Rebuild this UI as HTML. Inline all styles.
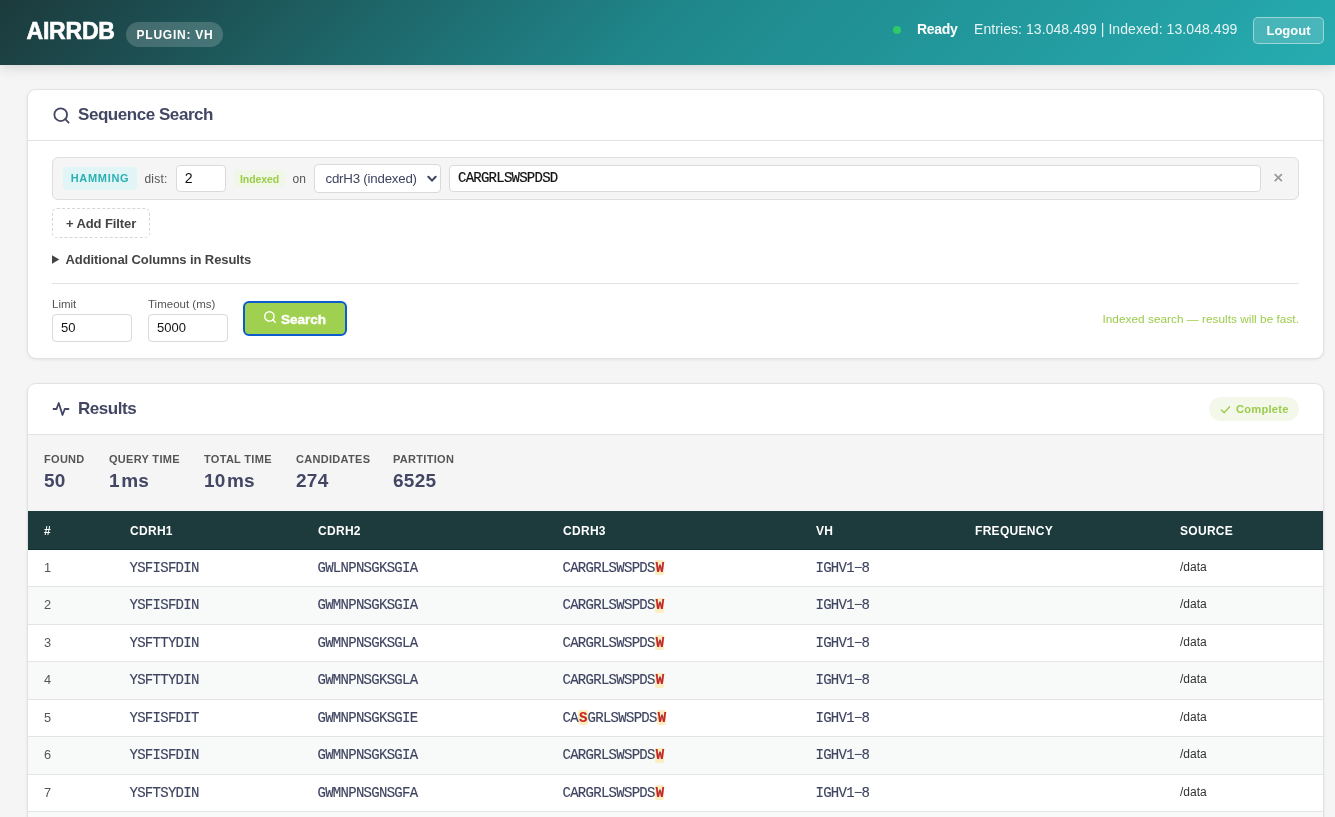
<!DOCTYPE html>
<html lang="en">
<head>
<meta charset="utf-8">
<title>AIRRDB</title>
<style>
*{box-sizing:border-box;margin:0;padding:0}
html,body{width:1335px;height:817px;overflow:hidden;background:#f5f5f5;font-family:"Liberation Sans",sans-serif;color:#3f4460}
.abs{position:absolute;white-space:nowrap}
#hdr{position:absolute;left:0;top:0;width:1335px;height:65px;background:linear-gradient(135deg,#1c3a3c 0%,#1f888c 50%,#26acb0 100%);box-shadow:0 2px 12px rgba(0,0,0,.15)}
#logo{left:26.5px;top:16px;font-size:23px;font-weight:700;color:#fff;letter-spacing:-.2px;line-height:30px;-webkit-text-stroke:.6px #fff}
#plugin{left:126px;top:22px;width:97px;height:25px;border-radius:13px;background:rgba(255,255,255,.18);color:#fff;font-size:12px;font-weight:700;letter-spacing:.75px;line-height:27px;text-align:center;padding-left:1px}
#dot{left:893px;top:26px;width:8px;height:8px;border-radius:50%;background:#2ec866}
#ready{left:917px;top:19px;font-size:14px;font-weight:700;color:#fff;line-height:20px;letter-spacing:-.3px}
#entries{left:974px;top:19px;font-size:14px;color:rgba(255,255,255,.88);line-height:20px;letter-spacing:.07px}
#logout{left:1253px;top:17px;width:71px;height:27px;border:1px solid rgba(255,255,255,.45);border-radius:5px;background:rgba(255,255,255,.16);color:#fff;font-size:13px;font-weight:700;line-height:25px;text-align:center}
.card{position:absolute;left:27px;width:1297px;background:#fff;border:1px solid #e2e2e2;border-radius:9px;box-shadow:0 1px 3px rgba(0,0,0,.08)}
.chead{position:absolute;left:0;top:0;width:100%;height:51px;border-bottom:1px solid #e2e2e2}
.ctitle{font-size:17px;font-weight:700;color:#434764;line-height:22px;letter-spacing:-.45px}
input,select{font-family:inherit}
.inp{position:absolute;background:#fff;border:1px solid #dadada;border-radius:4px;height:27px;font-size:13px;line-height:25px;color:#111;padding-left:8px;white-space:nowrap}
.mono{font-family:"Liberation Mono",monospace}

.sl{font-size:11px;font-weight:700;letter-spacing:.3px;color:#555;line-height:14px}
.sv{font-size:19px;font-weight:700;color:#434764;line-height:24px;letter-spacing:.25px;word-spacing:-4.2px}
.th{font-size:12px;font-weight:700;letter-spacing:.3px;color:#fff;line-height:16px}
.tr{z-index:0;left:0;width:1295px;height:37.5px;border-bottom:1px solid #e4e4e4}
.td{top:0;line-height:36.5px;font-size:13px;color:#3f4460}
.n{color:#555;font-size:12.8px}
.m{margin-left:-.5px;font-size:14px;letter-spacing:-.72px;-webkit-text-stroke:.15px #3f4460}
.m b{position:relative;color:#d9201f;padding:0 1px;font-weight:700}
.m b::before{content:"";position:absolute;left:0;right:0;top:.5px;height:15px;background:#fdeec0;border-radius:2px;z-index:-1}
.src{font-size:12px;color:#333;line-height:34.5px}
.card,#hdr{will-change:transform}
</style>
</head>
<body>
<div id="hdr">
  <div class="abs" id="logo">AIRRDB</div>
  <div class="abs" id="plugin">PLUGIN: VH</div>
  <div class="abs" id="dot"></div>
  <div class="abs" id="ready">Ready</div>
  <div class="abs" id="entries">Entries: 13.048.499 | Indexed: 13.048.499</div>
  <div class="abs" id="logout">Logout</div>
</div>

<!-- Sequence search card -->
<div class="card" id="c1" style="top:89px;height:270px">
  <div class="chead">
    <svg class="abs" style="left:24px;top:16px" width="19" height="19" viewBox="0 0 24 24" fill="none" stroke="#434764" stroke-width="2.3" stroke-linecap="round"><circle cx="11" cy="11" r="8"/><path d="M21 21l-4.3-4.3"/></svg>
    <div class="abs ctitle" style="left:50px;top:14px">Sequence Search</div>
  </div>

  <!-- filter row (card-relative coords: page x-28, y-90) -->
  <div class="abs" id="frow" style="left:24px;top:67px;width:1247px;height:43px;background:#f5f5f5;border:1px solid #dedede;border-radius:6px"></div>
  <div class="abs" id="ham" style="left:35px;top:77px;width:74px;height:23px;border-radius:4px;background:#e2f5f6;color:#2bb0b3;font-size:11px;font-weight:700;letter-spacing:.68px;line-height:23px;text-align:center">HAMMING</div>
  <div class="abs" style="left:116.5px;top:80px;font-size:12px;letter-spacing:.2px;color:#555;line-height:18px">dist:</div>
  <div class="inp mono" style="left:148px;top:75px;width:50px;height:27px;font-size:14px;line-height:27px;padding-left:7.5px">2</div>
  <div class="abs" id="idx" style="left:206px;top:80px;width:51px;height:17px;border-radius:3px;background:#f1f7e6;color:#9ccc4c;font-size:10.5px;font-weight:700;line-height:18px;text-align:center;letter-spacing:-.1px">Indexed</div>
  <div class="abs" style="left:264.5px;top:80px;font-size:12px;letter-spacing:.2px;color:#555;line-height:18px">on</div>
  <div class="inp" id="sel" style="left:286px;top:74px;width:127px;height:29px;line-height:27px;color:#3f4460;font-size:13.3px;letter-spacing:-.22px;padding-left:10.5px">cdrH3 (indexed)
    <svg class="abs" style="left:112px;top:9.5px" width="10" height="8.2" viewBox="0 0 11 9" fill="none" stroke="#3f4460" stroke-width="2.3" stroke-linecap="round" stroke-linejoin="round"><path d="M1.5 2l4 4.2 4-4.2"/></svg>
  </div>
  <div class="inp mono" style="left:421px;top:75px;width:812px;height:27px;line-height:25px;font-size:14px;letter-spacing:-.75px;-webkit-text-stroke:.2px #111">CARGRLSWSPDSD</div>
  <svg class="abs" style="left:1244px;top:82px" width="12" height="12" viewBox="0 0 12 12" fill="none" stroke="#999" stroke-width="1.7"><path d="M2.7 2.2l7.2 6.9M9.9 2.2l-7.2 6.9"/></svg>

  <div class="abs" id="addf" style="left:24px;top:118px;width:98px;height:30px;border:1px dashed #d6d6d6;border-radius:5px;font-size:13px;font-weight:700;color:#444;line-height:30px;text-align:center;letter-spacing:-.1px">+ Add Filter</div>

  <svg class="abs" style="left:24px;top:165px" width="8" height="9" viewBox="0 0 8 9"><path d="M0 0.3L7.3 4.5L0 8.7z" fill="#444"/></svg>
  <div class="abs" style="left:37.5px;top:161px;font-size:13px;font-weight:700;color:#444;line-height:18px;letter-spacing:-.1px">Additional Columns in Results</div>

  <div class="abs" style="left:24px;top:193px;width:1247px;height:1px;background:#e2e2e2"></div>

  <div class="abs" style="left:24px;top:207px;font-size:11.5px;color:#555;line-height:14px">Limit</div>
  <div class="inp" style="left:24px;top:224px;width:80px;height:28px;line-height:26px;font-size:13px">50</div>
  <div class="abs" style="left:120px;top:207px;font-size:11.5px;color:#555;line-height:14px">Timeout (ms)</div>
  <div class="inp" style="left:120px;top:224px;width:80px;height:28px;line-height:26px;font-size:13px">5000</div>

  <div class="abs" id="sbtn" style="left:215px;top:211px;width:104px;height:35px;border:2px solid #0c5ccf;border-radius:6px;background:#a0d04f;-webkit-text-stroke:.4px #fff;color:#fff;font-size:13.5px;font-weight:700;line-height:31px">
    <svg class="abs" style="left:18px;top:7px" width="14" height="14" viewBox="0 0 24 24" fill="none" stroke="#fff" stroke-width="2.4" stroke-linecap="round"><circle cx="11" cy="11" r="8"/><path d="M21 21l-4.3-4.3"/></svg>
    <span class="abs" style="left:36px;top:1px">Search</span>
  </div>
  <div class="abs" style="right:24px;top:221px;font-size:11.8px;letter-spacing:.03px;color:#9ccc4c;line-height:16px">Indexed search &mdash; results will be fast.</div>
</div>

<!-- Results card -->
<div class="card" id="c2" style="top:383px;height:460px;border-bottom-left-radius:0;border-bottom-right-radius:0">
  <div class="chead">
    <div class="abs ctitle" style="left:50px;top:14px">Results</div>
  </div>

  <svg class="abs" style="left:24px;top:16px" width="18" height="18" viewBox="0 0 24 24" fill="none" stroke="#434764" stroke-width="2.4" stroke-linecap="round" stroke-linejoin="round"><path d="M2 12h4l3-8 5 16 3-8h5"/></svg>
  <div class="abs" id="cmpl" style="left:1181px;top:13px;width:90px;height:24px;border-radius:12px;background:#f3f8ea;color:#9ccc4c;font-size:11.2px;letter-spacing:.2px;font-weight:700;line-height:25px">
    <svg class="abs" style="left:10.5px;top:6.5px" width="11" height="11" viewBox="0 0 24 24" fill="none" stroke="#9ccc4c" stroke-width="3" stroke-linecap="round" stroke-linejoin="round"><path d="M3 13l6 6L21 6"/></svg>
    <span class="abs" style="left:27px;top:0">Complete</span>
  </div>
  <div class="abs" id="stats" style="left:0;top:51px;width:1295px;height:76px;background:#f5f5f5"></div>
  <div class="abs sl" style="left:16px;top:68px">FOUND</div><div class="abs sv" style="left:16px;top:85px">50</div>
  <div class="abs sl" style="left:81px;top:68px">QUERY TIME</div><div class="abs sv" style="left:81px;top:85px">1 ms</div>
  <div class="abs sl" style="left:176px;top:68px">TOTAL TIME</div><div class="abs sv" style="left:176px;top:85px">10 ms</div>
  <div class="abs sl" style="left:268px;top:68px">CANDIDATES</div><div class="abs sv" style="left:268px;top:85px">274</div>
  <div class="abs sl" style="left:365px;top:68px">PARTITION</div><div class="abs sv" style="left:365px;top:85px">6525</div>
  <div class="abs" id="thead" style="left:0;top:127px;width:1295px;height:39px;background:#1d3a3c;border-bottom:1px solid #0f2f31"></div>
  <div class="abs th" style="left:16px;top:139px">#</div>
  <div class="abs th" style="left:102px;top:139px">CDRH1</div>
  <div class="abs th" style="left:290px;top:139px">CDRH2</div>
  <div class="abs th" style="left:535px;top:139px">CDRH3</div>
  <div class="abs th" style="left:788px;top:139px">VH</div>
  <div class="abs th" style="left:947px;top:139px">FREQUENCY</div>
  <div class="abs th" style="left:1152px;top:139px">SOURCE</div>
  <div class="abs tr" style="top:165.5px;background:#fff"><span class="abs td n" style="left:16px">1</span><span class="abs td mono m" style="left:102px">YSFISFDIN</span><span class="abs td mono m" style="left:290px">GWLNPNSGKSGIA</span><span class="abs td mono m" style="left:535px">CARGRLSWSPDS<b>W</b></span><span class="abs td mono m" style="left:788px">IGHV1&minus;8</span><span class="abs td src" style="left:1152px">/data</span></div>
  <div class="abs tr" style="top:203.0px;background:#f8f9f9"><span class="abs td n" style="left:16px">2</span><span class="abs td mono m" style="left:102px">YSFISFDIN</span><span class="abs td mono m" style="left:290px">GWMNPNSGKSGIA</span><span class="abs td mono m" style="left:535px">CARGRLSWSPDS<b>W</b></span><span class="abs td mono m" style="left:788px">IGHV1&minus;8</span><span class="abs td src" style="left:1152px">/data</span></div>
  <div class="abs tr" style="top:240.5px;background:#fff"><span class="abs td n" style="left:16px">3</span><span class="abs td mono m" style="left:102px">YSFTTYDIN</span><span class="abs td mono m" style="left:290px">GWMNPNSGKSGLA</span><span class="abs td mono m" style="left:535px">CARGRLSWSPDS<b>W</b></span><span class="abs td mono m" style="left:788px">IGHV1&minus;8</span><span class="abs td src" style="left:1152px">/data</span></div>
  <div class="abs tr" style="top:278.0px;background:#f8f9f9"><span class="abs td n" style="left:16px">4</span><span class="abs td mono m" style="left:102px">YSFTTYDIN</span><span class="abs td mono m" style="left:290px">GWMNPNSGKSGLA</span><span class="abs td mono m" style="left:535px">CARGRLSWSPDS<b>W</b></span><span class="abs td mono m" style="left:788px">IGHV1&minus;8</span><span class="abs td src" style="left:1152px">/data</span></div>
  <div class="abs tr" style="top:315.5px;background:#fff"><span class="abs td n" style="left:16px">5</span><span class="abs td mono m" style="left:102px">YSFISFDIT</span><span class="abs td mono m" style="left:290px">GWMNPNSGKSGIE</span><span class="abs td mono m" style="left:535px">CA<b>S</b>GRLSWSPDS<b>W</b></span><span class="abs td mono m" style="left:788px">IGHV1&minus;8</span><span class="abs td src" style="left:1152px">/data</span></div>
  <div class="abs tr" style="top:353.0px;background:#f8f9f9"><span class="abs td n" style="left:16px">6</span><span class="abs td mono m" style="left:102px">YSFISFDIN</span><span class="abs td mono m" style="left:290px">GWMNPNSGKSGIA</span><span class="abs td mono m" style="left:535px">CARGRLSWSPDS<b>W</b></span><span class="abs td mono m" style="left:788px">IGHV1&minus;8</span><span class="abs td src" style="left:1152px">/data</span></div>
  <div class="abs tr" style="top:390.5px;background:#fff"><span class="abs td n" style="left:16px">7</span><span class="abs td mono m" style="left:102px">YSFTSYDIN</span><span class="abs td mono m" style="left:290px">GWMNPNSGNSGFA</span><span class="abs td mono m" style="left:535px">CARGRLSWSPDS<b>W</b></span><span class="abs td mono m" style="left:788px">IGHV1&minus;8</span><span class="abs td src" style="left:1152px">/data</span></div>
  <div class="abs tr" style="top:428.0px;background:#f8f9f9"><span class="abs td n" style="left:16px">8</span><span class="abs td mono m" style="left:102px">YSFTSYDIN</span><span class="abs td mono m" style="left:290px">GWMNPNSGNSGFA</span><span class="abs td mono m" style="left:535px">CARGRLSWSPDS<b>W</b></span><span class="abs td mono m" style="left:788px">IGHV1&minus;8</span><span class="abs td src" style="left:1152px">/data</span></div>
</div>
</body>
</html>
